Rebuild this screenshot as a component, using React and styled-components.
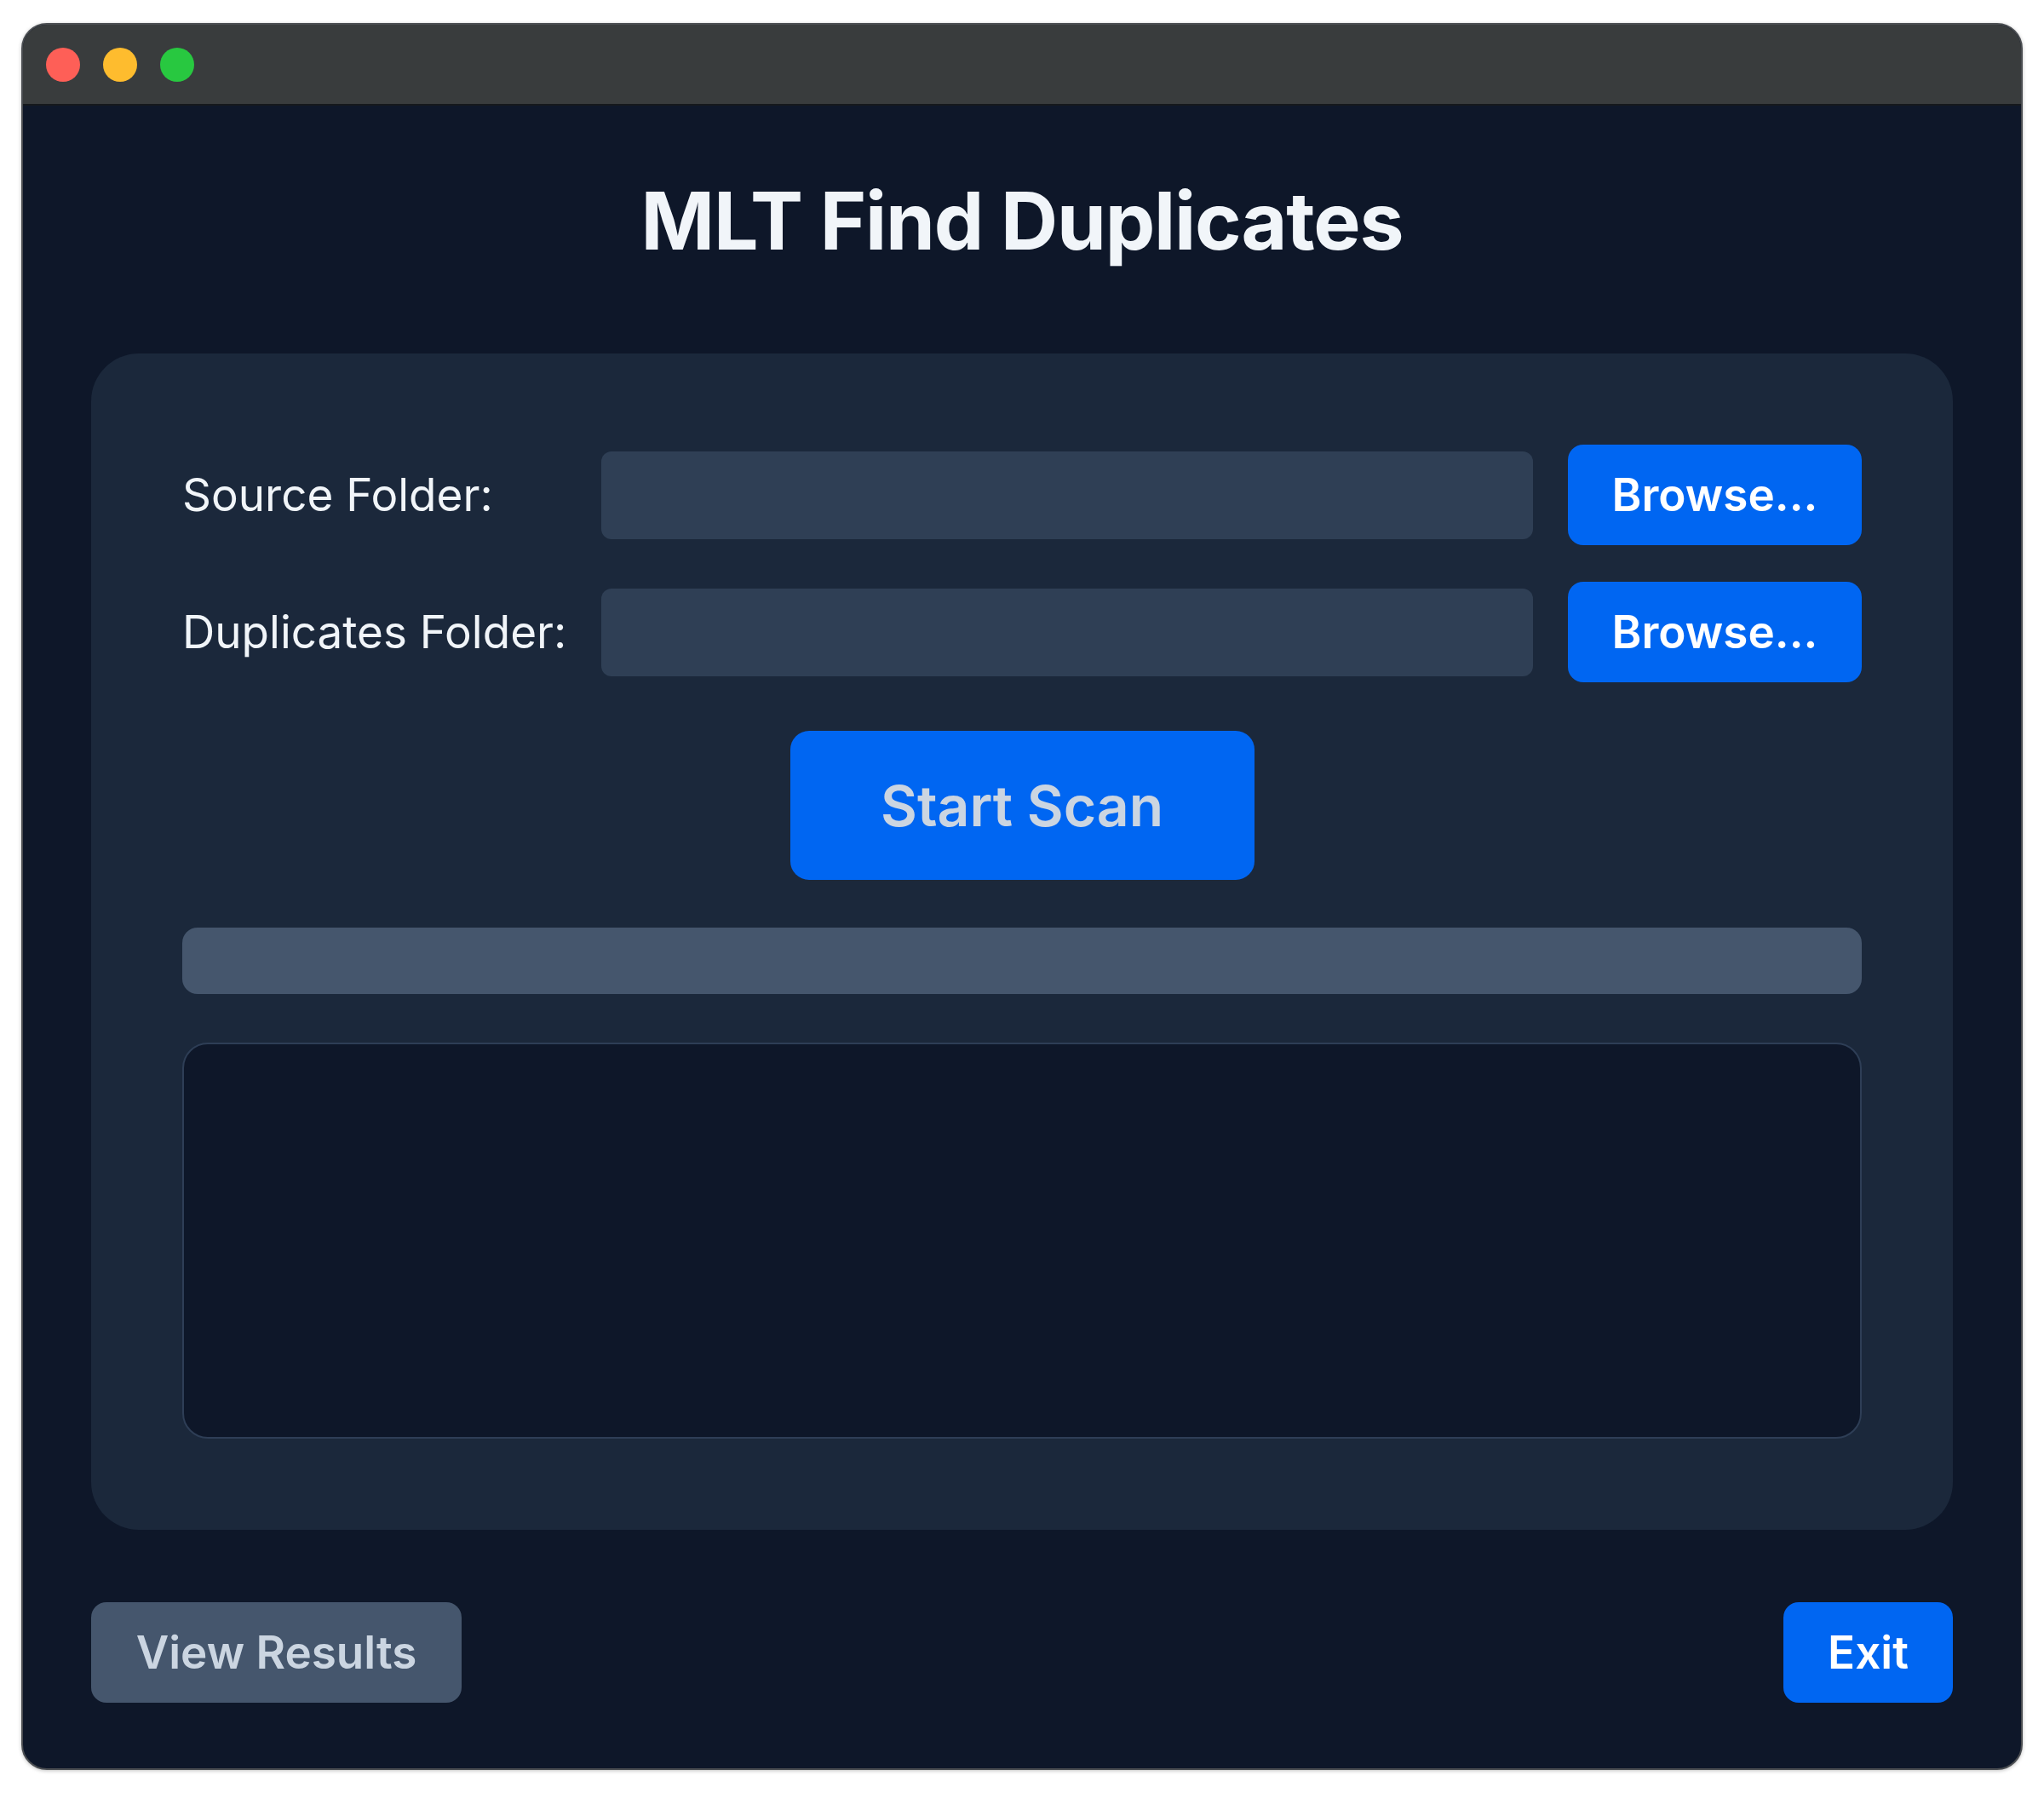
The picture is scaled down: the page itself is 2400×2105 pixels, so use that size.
import styled, { createGlobalStyle } from "styled-components";

const GlobalStyle = createGlobalStyle`
  html, body {
    margin: 0;
    padding: 0;
    background: #ffffff;
  }
  body {
    font-family: Inter, "Noto Sans", "Liberation Sans", sans-serif;
  }
`;

const Page = styled.div`
  padding: 27px 25px 26px 25px;
`;

const Window = styled.div`
  width: 2350px;
  height: 2051px;
  box-sizing: border-box;
  border: 2px solid #4b4e52;
  border-radius: 30px;
  overflow: hidden;
  background: #0e1729;
  display: flex;
  flex-direction: column;
  box-shadow: 0 1px 4px rgba(0, 0, 0, 0.25);
`;

const TitleBar = styled.div`
  height: 93px;
  flex: none;
  background: #393c3d;
  border-bottom: 2px solid #15181c;
  display: flex;
  align-items: center;
  gap: 27px;
  padding-left: 27px;
`;

const Light = styled.span`
  width: 40px;
  height: 40px;
  border-radius: 50%;
  background: ${({ color }) => color};
`;

const Body = styled.div`
  flex: 1;
  display: flex;
  flex-direction: column;
  padding: 0 80px;
`;

const Title = styled.h1`
  margin: 76px 0 96px 0;
  text-align: center;
  font-size: 93px;
  line-height: 119px;
  font-weight: 700;
  letter-spacing: -1.2px;
  color: #f1f5f9;
`;

const Card = styled.div`
  background: #1b283b;
  border-radius: 56px;
  padding: 107px;
  display: flex;
  flex-direction: column;
`;

const FieldRow = styled.div`
  display: grid;
  grid-template-columns: 451px 1fr 345px;
  column-gap: 41px;
  align-items: center;
  margin-bottom: ${({ last }) => (last ? "57px" : "43px")};
`;

const Label = styled.label`
  font-size: 53px;
  color: #f1f5f9;
  white-space: nowrap;
`;

const PathInput = styled.div`
  height: 103px;
  background: #2f3f55;
  border-radius: 12px;
`;

const Button = styled.button`
  height: 118px;
  border: none;
  border-radius: 18px;
  font-family: inherit;
  font-size: ${({ big }) => (big ? "66px" : "53px")};
  font-weight: 600;
  background: ${({ muted }) => (muted ? "#45566d" : "#0066f2")};
  color: ${({ dim }) => (dim ? "#cbd5e1" : "#ffffff")};
  padding: 0;
  cursor: pointer;
`;

const BrowseButton = styled(Button)`
  width: 345px;
`;

const ScanButton = styled(Button)`
  align-self: center;
  width: 545px;
  height: 175px;
  border-radius: 22px;
  margin-bottom: 56px;
`;

const Progress = styled.div`
  height: 78px;
  background: #45566d;
  border-radius: 18px;
  margin-bottom: 57px;
`;

const LogBox = styled.div`
  height: 465px;
  box-sizing: border-box;
  background: #0e1729;
  border: 2px solid #2e3e56;
  border-radius: 30px;
`;

const Footer = styled.div`
  display: flex;
  justify-content: space-between;
  margin-top: 85px;
`;

const FooterButton = styled(Button)`
  width: ${({ w }) => w}px;
`;

export default function App() {
  return (
    <>
      <GlobalStyle />
      <Page>
        <Window>
          <TitleBar>
            <Light color="#fe5f57" />
            <Light color="#febc2e" />
            <Light color="#28c840" />
          </TitleBar>
          <Body>
            <Title>MLT Find Duplicates</Title>
            <Card>
              <FieldRow>
                <Label>Source Folder:</Label>
                <PathInput />
                <BrowseButton>Browse...</BrowseButton>
              </FieldRow>
              <FieldRow last>
                <Label>Duplicates Folder:</Label>
                <PathInput />
                <BrowseButton>Browse...</BrowseButton>
              </FieldRow>
              <ScanButton big dim>Start Scan</ScanButton>
              <Progress />
              <LogBox />
            </Card>
            <Footer>
              <FooterButton w={435} muted dim>View Results</FooterButton>
              <FooterButton w={199}>Exit</FooterButton>
            </Footer>
          </Body>
        </Window>
      </Page>
    </>
  );
}
